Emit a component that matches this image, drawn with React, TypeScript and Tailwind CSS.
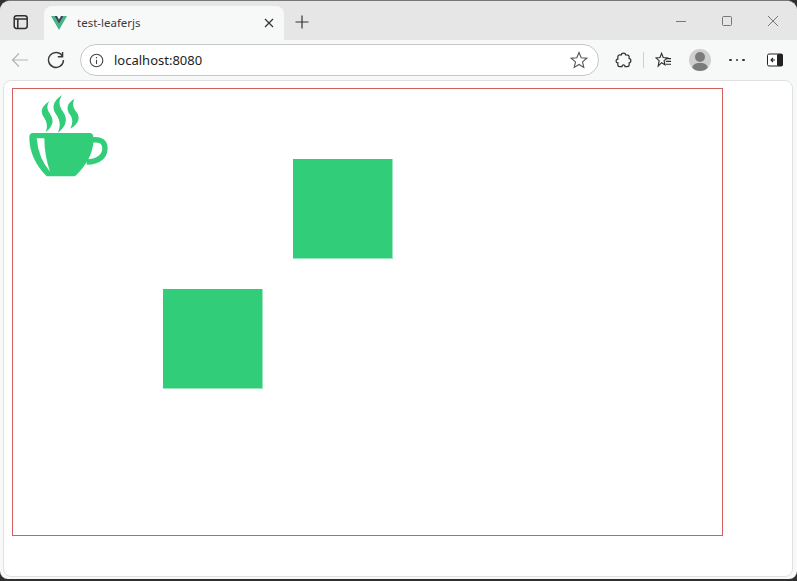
const stroke = "#3a3a3a";

function TabStripIcon() {
  return (
    <svg width="16" height="16" viewBox="0 0 16 16" fill="none" stroke="#2f2f2f" strokeWidth="1.5">
      <rect x="1.2" y="1.7" width="13" height="12.8" rx="2.4" />
      <path d="M1.2 5H14.2M4.8 5V14.5" />
    </svg>
  );
}

function VueLogo() {
  return (
    <svg width="16" height="14" viewBox="0 0 16 14">
      <path d="M0 0H3.4L8 8 12.6 0H16L8 14Z" fill="#41b883" />
      <path d="M3.4 0H6L8 3.5 10 0H12.6L8 8Z" fill="#35495e" />
    </svg>
  );
}

function CupIcon() {
  return (
    <svg width="110" height="100" viewBox="0 0 330 300">
      <g fill="#32cd79">
        <path d="M118 49C93 65 91 80 101 96C111 110 114 125 107 141C130 125 132 105 122 90C110 72 109 65 118 49Z" />
        <path d="M156 30C126 50 126 70 138 88C150 105 153 120 144 143C172 122 172 100 160 82C147 62 144 50 156 30Z" />
        <path d="M194 41C169 55 169 72 179 88C189 100 189 115 181 131C209 115 211 95 199 80C189 68 186 55 194 41Z" />
        <path d="M70 144H238Q250 144 250 156V170Q248 222 195 274H110Q58 222 58 156Q58 144 70 144Z" />
      </g>
      <path d="M246 165Q285 160 285 191Q282 229 230 231" fill="none" stroke="#32cd79" strokeWidth="16" />
      <path d="M80 160H103Q103 210 120 260Q85 220 80 160Z" fill="#fff" />
    </svg>
  );
}

function App() {
  return (
    <div className="flex h-[581px] w-[797px] flex-col overflow-hidden bg-[#2f2f2f] pb-[2px] font-['Noto_Sans',sans-serif]">
      <div className="flex min-h-0 flex-1 flex-col overflow-hidden rounded-t-[10px] rounded-b-lg border-t border-[#777] bg-[#f7f9f8]">
        <div className="flex h-[39px] items-end bg-[#e6e6e6] pl-[13px]">
          <div className="mb-[2px] flex h-[32px] w-[31px] items-center">
            <TabStripIcon />
          </div>
          <div className="flex h-[34px] w-[240px] items-center rounded-t-lg bg-[#f7f9f8] pl-[7px] pr-[9px]">
            <VueLogo />
            <span className="ml-[10px] text-[11.5px] text-[#3a3a3a]">test-leaferjs</span>
            <svg className="ml-auto" width="12" height="12" viewBox="0 0 12 12" stroke="#333" strokeWidth="1.2">
              <path d="M2 2L10 10M10 2L2 10" />
            </svg>
          </div>
          <svg className="mb-[10px] ml-[10px]" width="16" height="16" viewBox="0 0 16 16" stroke="#333" strokeWidth="1.2">
            <path d="M8 1.5V14.5M1.5 8H14.5" />
          </svg>
          <div className="ml-auto mb-[14px] flex items-center gap-[36px] pr-[19px]">
            <svg width="10" height="10" viewBox="0 0 10 10" stroke="#777">
              <path d="M0 5.5H10" />
            </svg>
            <svg width="10" height="10" viewBox="0 0 10 10" fill="none" stroke="#777">
              <rect x="0.5" y="0.5" width="9" height="9" rx="1" />
            </svg>
            <svg width="10" height="10" viewBox="0 0 10 10" stroke="#777">
              <path d="M0 0L10 10M10 0L0 10" />
            </svg>
          </div>
        </div>

        <div className="flex h-[40px] shrink-0 items-center pl-[11px]">
          <svg width="18" height="16" viewBox="0 0 18 16" fill="none" stroke="#b4b4b4" strokeWidth="1.2">
            <path d="M17 8H1.5M8 1.5L1.5 8L8 14.5" />
          </svg>
          <svg className="ml-[18px]" width="18" height="18" viewBox="0 0 18 18" fill="none" stroke={stroke} strokeWidth="1.4">
            <path d="M15.6 1V5.8H10.8M15.6 5.4A7.5 7.5 0 1 0 16.5 9" />
          </svg>
          <div className="ml-[15px] flex h-[32px] w-[519px] items-center rounded-full border border-[#c6c6c6] bg-white pl-[8px] pr-[10px]">
            <svg width="15" height="15" viewBox="0 0 15 15" fill="none" stroke="#444" strokeWidth="1.1">
              <circle cx="7.5" cy="7.5" r="6.3" />
              <path d="M7.5 6.7V11M7.5 4V5.2" />
            </svg>
            <span className="ml-[10px] pt-px text-[13px] text-[#222]">localhost:8080</span>
            <svg className="ml-auto" width="18" height="18" viewBox="0 0 18 18" fill="none" stroke="#555" strokeWidth="1.1">
              <path d="M9 1.5L11.2 6.7L16.8 7.2L12.5 10.9L13.8 16.4L9 13.5L4.2 16.4L5.5 10.9L1.2 7.2L6.8 6.7Z" />
            </svg>
          </div>
          <svg className="ml-[16px]" width="17" height="18" viewBox="0 0 18 18" fill="none" stroke="#2f2f2f" strokeWidth="1.3">
            <path d="M6.8 3.6C6.8 1 11.2 1 11.2 3.6C12.6 3.6 15 3.4 15 5.8V7.6C17.4 7.6 17.4 12 15 12V14C15 15.6 13.6 16 12.6 16H10.6C10.8 13.6 7.2 13.6 7.4 16H5C3.6 16 3 15 3 14V12C0.6 12.4 0.6 7.8 3 8.2V5.8C3 4.4 4 3.6 5 3.6Z" />
          </svg>
          <div className="ml-[11px] h-[16px] w-px bg-[#d0d0d0]" />
          <svg className="ml-[11px]" width="17" height="18" viewBox="0 0 18 18" fill="none" stroke="#2f2f2f" strokeWidth="1.2">
            <path d="M7 2L8.7 6.4L13 6.8L9.6 9.7L10.6 14L7 11.8L3.4 15.5L4.4 9.7L1 6.8L5.3 6.4Z" />
            <path d="M11.5 7.5H17M11.5 10.5H17M11.5 13.5H17" />
          </svg>
          <div className="relative ml-[17px] h-[22px] w-[22px] overflow-hidden rounded-full bg-[#cfcfcf]">
            <div className="absolute left-[6px] top-[3px] h-[10px] w-[10px] rounded-full bg-[#7b7b7b]" />
            <div className="absolute left-[3px] top-[14px] h-[12px] w-[16px] rounded-full bg-[#7b7b7b]" />
          </div>
          <div className="ml-[18px] flex gap-[4px]">
            <i className="h-[2.5px] w-[2.5px] rounded-full bg-[#333]" />
            <i className="h-[2.5px] w-[2.5px] rounded-full bg-[#333]" />
            <i className="h-[2.5px] w-[2.5px] rounded-full bg-[#333]" />
          </div>
          <svg className="ml-[22px]" width="16" height="14" viewBox="0 0 16 14">
            <rect x="0.5" y="1" width="15" height="12" rx="1.5" fill="#fff" stroke="#222" />
            <rect x="10" y="1" width="6" height="12" rx="1.5" fill="#222" />
            <path d="M8 7H4M6 5L4 7L6 9" stroke="#222" strokeWidth="1.1" fill="none" />
          </svg>
        </div>

        <div className="flex min-h-0 flex-1 flex-col pb-[2px] pl-[3px] pr-[4px]">
          <div className="flex-1 rounded-lg border border-[#e0e0e0] bg-white pl-[8px] pt-[7px]">
            <div className="relative h-[448px] w-[711px] border border-[#d0605f]">
              <div className="absolute left-[-3px] top-[-4px]">
                <CupIcon />
              </div>
              <div className="absolute left-[280px] top-[70px] h-[100px] w-[100px] border-b border-r border-[#98e6bc] bg-[#32cd79]" />
              <div className="absolute left-[150px] top-[200px] h-[100px] w-[100px] border-b border-r border-[#98e6bc] bg-[#32cd79]" />
            </div>
          </div>
        </div>
      </div>
    </div>
  );
}

export default App;
